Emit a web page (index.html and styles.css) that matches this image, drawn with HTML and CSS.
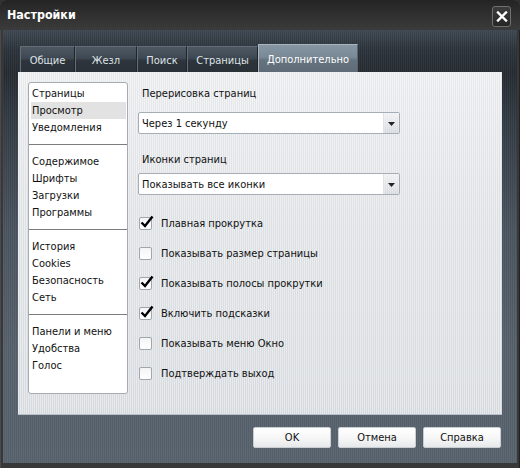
FILE: index.html
```html
<!DOCTYPE html>
<html lang="ru">
<head>
<meta charset="utf-8">
<title>Настройки</title>
<link rel="stylesheet" href="styles.css">
</head>
<body>
<div class="window">
  <div class="titlebar">
    <span class="title">Настройки</span>
    <div class="close">
      <svg width="12" height="11" viewBox="0 0 12 11"><path d="M2 1.5 L10 9.5 M10 1.5 L2 9.5" stroke="#fff" stroke-width="2.4" stroke-linecap="square"/></svg>
    </div>
  </div>
  <div class="client">
    <div class="tabs">
      <div class="tab w1">Общие</div>
      <div class="tab w2">Жезл</div>
      <div class="tab w3">Поиск</div>
      <div class="tab w4">Страницы</div>
      <div class="tab w5 active">Дополнительно</div>
    </div>
    <div class="panel">
      <div class="nav">
        <div class="nav-item">Страницы</div>
        <div class="nav-item selected">Просмотр</div>
        <div class="nav-item">Уведомления</div>
        <div class="nav-sep"></div>
        <div class="nav-item">Содержимое</div>
        <div class="nav-item">Шрифты</div>
        <div class="nav-item">Загрузки</div>
        <div class="nav-item">Программы</div>
        <div class="nav-sep"></div>
        <div class="nav-item">История</div>
        <div class="nav-item">Cookies</div>
        <div class="nav-item">Безопасность</div>
        <div class="nav-item">Сеть</div>
        <div class="nav-sep"></div>
        <div class="nav-item">Панели и меню</div>
        <div class="nav-item">Удобства</div>
        <div class="nav-item">Голос</div>
      </div>
      <div class="settings">
        <div class="label first">Перерисовка страниц</div>
        <div class="select first-select">
          <span class="select-text">Через 1 секунду</span>
          <span class="select-btn"><svg width="7" height="4" viewBox="0 0 7 4"><path d="M0 0 H7 L3.5 4 Z" fill="#222"/></svg></span>
        </div>
        <div class="label second">Иконки страниц</div>
        <div class="select second-select">
          <span class="select-text">Показывать все иконки</span>
          <span class="select-btn"><svg width="7" height="4" viewBox="0 0 7 4"><path d="M0 0 H7 L3.5 4 Z" fill="#222"/></svg></span>
        </div>
        <div class="checks">
          <div class="check-row"><span class="box checked"><svg class="tick" width="16" height="16" viewBox="0 0 16 16"><path d="M2.5 7.5 L6 11 L13.5 1.5" fill="none" stroke="#000" stroke-width="2.4"/></svg></span><span>Плавная прокрутка</span></div>
          <div class="check-row"><span class="box"></span><span>Показывать размер страницы</span></div>
          <div class="check-row"><span class="box checked"><svg class="tick" width="16" height="16" viewBox="0 0 16 16"><path d="M2.5 7.5 L6 11 L13.5 1.5" fill="none" stroke="#000" stroke-width="2.4"/></svg></span><span>Показывать полосы прокрутки</span></div>
          <div class="check-row"><span class="box checked"><svg class="tick" width="16" height="16" viewBox="0 0 16 16"><path d="M2.5 7.5 L6 11 L13.5 1.5" fill="none" stroke="#000" stroke-width="2.4"/></svg></span><span>Включить подсказки</span></div>
          <div class="check-row"><span class="box"></span><span>Показывать меню Окно</span></div>
          <div class="check-row"><span class="box"></span><span>Подтверждать выход</span></div>
        </div>
      </div>
    </div>
    <div class="buttons">
      <div class="btn">OK</div>
      <div class="btn">Отмена</div>
      <div class="btn">Справка</div>
    </div>
  </div>
</div>
</body>
</html>
```
FILE: styles.css
```css
html, body {
  margin: 0;
  padding: 0;
  background: #2f2f2f;
}
body {
  font-family: "DejaVu Sans Condensed", "DejaVu Sans", sans-serif;
  font-size: 11px;
  color: #111;
}
.window {
  width: 520px;
  height: 468px;
  display: flex;
  flex-direction: column;
  background: #383838;
  border-radius: 6px 6px 0 0;
  overflow: hidden;
  box-shadow: inset 0 1px 0 #5a5a5a, inset 1px 0 0 #4a4a4a, inset -1px 0 0 #222;
}
.titlebar {
  height: 30px;
  flex: none;
  display: flex;
  align-items: center;
  justify-content: space-between;
  padding: 0 9px 0 7px;
  background: linear-gradient(#242424, #303030 50%, #3b3b3b);
}
.title {
  color: #fff;
  font-weight: bold;
  font-size: 12.4px;
  margin-top: -1px;
}
.close {
  width: 17px;
  height: 19px;
  border: 1px solid #707070;
  border-radius: 3px;
  background: linear-gradient(#3c3c3c, #262626);
  display: flex;
  align-items: center;
  justify-content: center;
  margin-top: 2px;
}
.client {
  flex: 1;
  margin: 0 3px 5px;
  display: flex;
  flex-direction: column;
  background-image:
    repeating-linear-gradient(90deg, rgba(255,255,255,0.035) 0 1px, rgba(0,0,0,0.04) 1px 2px),
    linear-gradient(#3f4853 0, #2c333a 20px, #262c32 42px, #333b44 90px, #4b5560 200px, #57626d 320px, #58636e 100%);
}
.tabs {
  height: 42px;
  box-sizing: border-box;
  padding: 14px 0 0 17px;
  display: flex;
  align-items: flex-end;
}
.tab {
  height: 26px;
  box-sizing: border-box;
  display: flex;
  align-items: center;
  justify-content: center;
  color: #dfe3e7;
  border: 1px solid #626d78;
  border-bottom: none;
  border-right-color: #1f252b;
  background: linear-gradient(#4d5863 0, #3e4852 45%, #2d343b 55%, #2a3137 100%);
  padding-top: 1px;
}
.w1 { width: 55px; }
.w2 { width: 62px; }
.w3 { width: 50px; }
.w4 { width: 71px; }
.w5 { width: 100px; }
.tab.active {
  height: 28px;
  color: #fff;
  border-color: #aab5bf;
  border-right-color: #5a6773;
  background: linear-gradient(#8796a3 0, #7a8996 45%, #66747f 55%, #5f6c78 100%);
}
.panel {
  margin-left: 15px;
  width: 484px;
  height: 343px;
  box-sizing: border-box;
  padding: 10px;
  display: flex;
  gap: 10px;
  border-bottom: 1px solid #b9c0c7;
  background-image:
    repeating-linear-gradient(90deg, rgba(255,255,255,0.35) 0 1px, rgba(0,0,0,0.02) 1px 2px),
    linear-gradient(#eceef0, #e2e5e8 40%, #dadee2);
}
.nav {
  width: 100px;
  height: 312px;
  box-sizing: border-box;
  background: #fff;
  border: 1px solid #a3abb3;
  border-radius: 3px;
  padding-top: 1.5px;
}
.nav-item {
  height: 17px;
  line-height: 17px;
  margin: 0 1px 0 2px;
  padding-left: 1px;
  white-space: nowrap;
}
.nav-item.selected {
  background: #e2e2e2;
}
.nav-sep {
  height: 1px;
  background: #7c7c7c;
  margin: 8px 0 8px;
}
.settings {
  width: 262px;
  display: flex;
  flex-direction: column;
}
.label {
  line-height: 14px;
  height: 14px;
  padding-left: 4px;
}
.label.first { margin-top: 5px; }
.first-select { margin-top: 11px; }
.label.second { margin-top: 19px; }
.second-select { margin-top: 6px; }
.select {
  height: 22px;
  box-sizing: border-box;
  border: 1px solid #a5adb6;
  border-radius: 2px;
  background: #fff;
  display: flex;
  align-items: center;
  justify-content: space-between;
}
.select-text {
  padding-left: 3px;
}
.select-btn {
  width: 16px;
  height: 20px;
  display: flex;
  align-items: center;
  justify-content: center;
  background-image:
    repeating-linear-gradient(90deg, rgba(255,255,255,0.3) 0 1px, transparent 1px 2px),
    linear-gradient(#eef0f2, #d6dadf);
  border-left: 1px solid #dfe3e7;
  padding-top: 1px;
  box-sizing: border-box;
}
.checks {
  margin-top: 13px;
  display: flex;
  flex-direction: column;
}
.check-row {
  height: 30px;
  display: flex;
  align-items: center;
  gap: 9px;
  padding-left: 1px;
}
.box {
  position: relative;
  width: 13px;
  height: 13px;
  box-sizing: border-box;
  border: 1px solid #9ea6ae;
  border-radius: 2px;
  background: linear-gradient(#f4f4f4, #fff);
  flex: none;
}
.tick {
  position: absolute;
  left: -1px;
  top: -3px;
}
.buttons {
  display: flex;
  justify-content: flex-end;
  gap: 7px;
  padding: 12px 16px 0 0;
}
.btn {
  width: 78px;
  height: 21px;
  box-sizing: border-box;
  border: 1px solid #c9ced3;
  border-radius: 2px;
  background: linear-gradient(#ffffff 0, #f7f7f7 50%, #e6e8ea 100%);
  display: flex;
  align-items: center;
  justify-content: center;
}
```
